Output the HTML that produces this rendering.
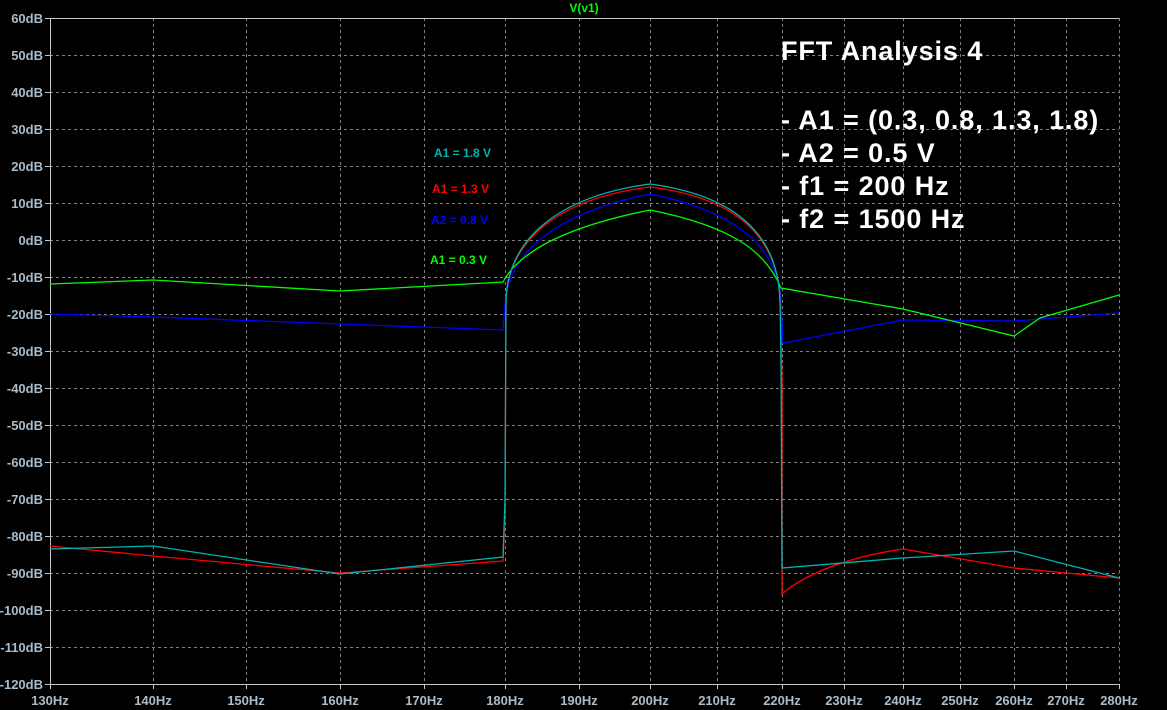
<!DOCTYPE html>
<html><head><style>
html,body{margin:0;padding:0;background:#000;}
svg{display:block;}
text{font-family:"Liberation Sans",sans-serif;}
</style></head><body>
<svg width="1167" height="710" viewBox="0 0 1167 710">
<rect width="1167" height="710" fill="#000"/>
<g stroke="#808080" stroke-width="1" stroke-dasharray="3,3" fill="none">
<path d="M50 55.5H1119M50 92.5H1119M50 129.5H1119M50 166.5H1119M50 203.5H1119M50 240.5H1119M50 277.5H1119M50 314.5H1119M50 351.5H1119M50 388.5H1119M50 425.5H1119M50 462.5H1119M50 499.5H1119M50 536.5H1119M50 573.5H1119M50 610.5H1119M50 647.5H1119"/>
<path d="M153.5 18V684M246.5 18V684M340.5 18V684M424.5 18V684M505.5 18V684M579.5 18V684M650.5 18V684M717.5 18V684M782.5 18V684M844.5 18V684M903.5 18V684M960.5 18V684M1014.5 18V684M1066.5 18V684M1119.5 18V684"/>
</g>
<path d="M50.5 18V684.5H1119" stroke="#c8c8c8" stroke-width="1" fill="none"/>
<path d="M50.5 18.5H1119" stroke="#c8c8c8" stroke-width="1" fill="none"/>
<g stroke="#c8c8c8"><path d="M45 18.5H50M45 55.5H50M45 92.5H50M45 129.5H50M45 166.5H50M45 203.5H50M45 240.5H50M45 277.5H50M45 314.5H50M45 351.5H50M45 388.5H50M45 425.5H50M45 462.5H50M45 499.5H50M45 536.5H50M45 573.5H50M45 610.5H50M45 647.5H50M45 684.5H50"/>
<path d="M50.5 684V689M153.5 684V689M246.5 684V689M340.5 684V689M424.5 684V689M505.5 684V689M579.5 684V689M650.5 684V689M717.5 684V689M782.5 684V689M844.5 684V689M903.5 684V689M960.5 684V689M1014.5 684V689M1066.5 684V689M1119.5 684V689"/></g>
<g fill="#a8bccc" font-size="13" font-weight="bold" text-anchor="end">
<text x="43" y="23">60dB</text><text x="43" y="60">50dB</text><text x="43" y="97">40dB</text><text x="43" y="134">30dB</text><text x="43" y="171">20dB</text><text x="43" y="208">10dB</text><text x="43" y="245">0dB</text><text x="43" y="282">-10dB</text><text x="43" y="319">-20dB</text><text x="43" y="356">-30dB</text><text x="43" y="393">-40dB</text><text x="43" y="430">-50dB</text><text x="43" y="467">-60dB</text><text x="43" y="504">-70dB</text><text x="43" y="541">-80dB</text><text x="43" y="578">-90dB</text><text x="43" y="615">-100dB</text><text x="43" y="652">-110dB</text><text x="43" y="689">-120dB</text>
</g>
<g fill="#a8bccc" font-size="13" font-weight="bold" text-anchor="middle">
<text x="50" y="705">130Hz</text><text x="153" y="705">140Hz</text><text x="246" y="705">150Hz</text><text x="340" y="705">160Hz</text><text x="424" y="705">170Hz</text><text x="505" y="705">180Hz</text><text x="579" y="705">190Hz</text><text x="650" y="705">200Hz</text><text x="717" y="705">210Hz</text><text x="782" y="705">220Hz</text><text x="844" y="705">230Hz</text><text x="903" y="705">240Hz</text><text x="960" y="705">250Hz</text><text x="1014" y="705">260Hz</text><text x="1066" y="705">270Hz</text><text x="1119" y="705">280Hz</text>
</g>
<text x="584" y="12" fill="#00ff00" font-size="12" font-weight="bold" text-anchor="middle">V(v1)</text>
<g fill="none" stroke-width="1.3">
<path stroke="#0000ff" d="M50 314L153 317L340 324L503 330L505 305C508 250 560 212 650 194C740 212 778 250 781 300L783 343L903 320L1014 321L1119 313"/>
<path stroke="#00ff00" d="M50 284L153 280L340 291L503 282C520 250 570 226 650 210C730 226 765 250 781 288L903 309L1014 336L1040 318L1119 295"/>
<path stroke="#ff0000" d="M50 546L153 556L340 573L503 561L505 515L506 300C508 240 560 198 650 187C740 198 778 240 780 300L782 380L782 594C800 578 840 558 903 549L1014 568L1119 578"/>
<path stroke="#00b4b4" d="M50 549L153 546L340 574L503 557L505 500L506 300C508 238 560 196 650 184C740 196 778 238 780 300L781 360L782 568L903 558L1014 551L1119 578"/>
</g>
<g font-size="12" font-weight="bold">
<text x="434" y="157" fill="#00b4b4">A1 = 1.8 V</text>
<text x="432" y="193" fill="#ff0000">A1 = 1.3 V</text>
<text x="431" y="224" fill="#0000ff">A2 = 0.8 V</text>
<text x="430" y="264" fill="#00ff00">A1 = 0.3 V</text>
</g>
<g fill="#fff" font-size="27" font-weight="bold" letter-spacing="0.9">
<text x="781" y="60">FFT Analysis 4</text>
<text x="781" y="129">- A1 = (0.3, 0.8, 1.3, 1.8)</text>
<text x="781" y="162">- A2 = 0.5 V</text>
<text x="781" y="195">- f1 = 200 Hz</text>
<text x="781" y="228">- f2 = 1500 Hz</text>
</g>
</svg>
</body></html>
